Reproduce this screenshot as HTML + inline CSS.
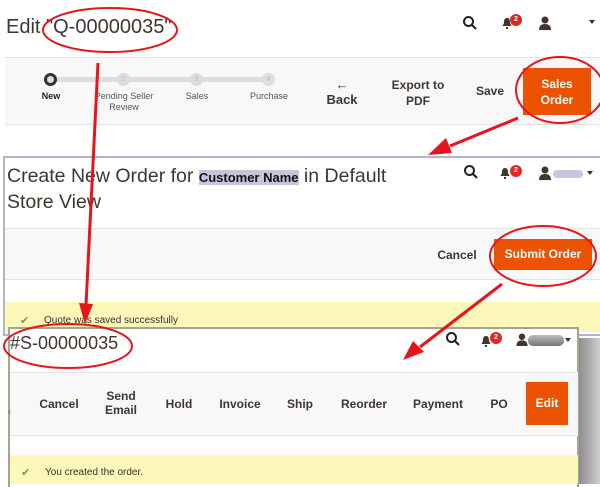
<!DOCTYPE html>
<html><head><meta charset="utf-8"><style>
*{margin:0;padding:0;box-sizing:border-box}
body{width:600px;height:484px;overflow:hidden;background:#fff;font-family:"Liberation Sans","DejaVu Sans",sans-serif;color:#303030;position:relative}
.a{position:absolute}
.t{font-size:20px;color:#41362f;font-weight:normal}
.bar{background:#f8f8f8;border-top:1px solid #e3e3e3;border-bottom:1px solid #e3e3e3}
.btn{font-size:12px;font-weight:bold;color:#41362f;text-align:center;line-height:14px}
.or{background:#eb5202;color:#fff;font-weight:bold;text-align:center}
.sm{font-size:9px;color:#555;text-align:center}
.c{width:13px;height:13px;border-radius:50%;background:#ddd;color:#bbb;font-size:7px;text-align:center;line-height:13px}
.msg{background:#fdf8ba;font-size:10px;color:#333}
.badge{width:12px;height:12px;border-radius:50%;background:#e22626;color:#fff;font-size:7px;font-weight:bold;text-align:center;line-height:12px}
</style></head><body>

<div class="a t" style="left:6px;top:16px">Edit "Q-00000035"</div>
<svg class="a" style="left:462px;top:15px" width="16" height="16" viewBox="0 0 16 16"><circle cx="6.5" cy="6.5" r="4.5" fill="none" stroke="#222" stroke-width="2"/><path d="M10 10l4 4" stroke="#222" stroke-width="2.2"/></svg>
<svg class="a" style="left:502px;top:17px" width="10" height="12" viewBox="0 0 10 12"><path d="M5 1c3 0 3 3 3 5l1.5 3H.5L2 6c0-2 0-5 3-5zM4 10h2v2H4z" fill="#41362f"/></svg>
<div class="a badge" style="left:510px;top:14px">2</div>
<svg class="a" style="left:539px;top:16px" width="12" height="14" viewBox="0 0 12 14"><circle cx="6" cy="4" r="3.5" fill="#41362f"/><path d="M0 14c0-4 2-6 6-6s6 2 6 6z" fill="#41362f"/></svg>
<div class="a" style="left:589px;top:20px;border:3px solid transparent;border-top:4px solid #333"></div>

<div class="a bar" style="left:5px;top:57px;width:595px;height:68px"></div>
<div class="a" style="left:51px;top:77px;width:218px;height:5px;background:#ddd"></div>
<div class="a c" style="left:44px;top:73px;background:#ddd;border:3px solid #333;width:13px;height:13px"></div>
<div class="a c" style="left:117px;top:73px">2</div>
<div class="a c" style="left:190px;top:73px">3</div>
<div class="a c" style="left:262px;top:73px">4</div>
<div class="a sm" style="left:30px;top:91px;width:42px;color:#222;font-weight:bold">New</div>
<div class="a sm" style="left:89px;top:91px;width:70px;line-height:11px">Pending Seller Review</div>
<div class="a sm" style="left:176px;top:91px;width:42px">Sales</div>
<div class="a sm" style="left:244px;top:91px;width:50px">Purchase</div>
<div class="a btn" style="left:320px;top:77px;width:44px;font-size:13px;line-height:15px">←<br>Back</div>
<div class="a btn" style="left:385px;top:77px;width:66px;line-height:16px">Export to<br>PDF</div>
<div class="a btn" style="left:470px;top:84px;width:40px">Save</div>
<div class="a or" style="left:523px;top:68px;width:68px;height:47px;font-size:12px;line-height:16px;padding-top:8px">Sales<br>Order</div>

<div class="a" style="left:3px;top:156px;width:600px;height:180px;background:#fff;border:2px solid #b5b1cf;border-right:none"></div>
<div class="a t" style="left:7px;top:164px;line-height:24px;font-size:19.5px">Create New Order for <span style="font-size:13px;font-weight:bold;color:#111;background:#c8c4dc">Customer Name</span> in Default<br>Store View</div>
<svg class="a" style="left:463px;top:164px" width="16" height="16" viewBox="0 0 16 16"><circle cx="6.5" cy="6.5" r="4.5" fill="none" stroke="#222" stroke-width="2"/><path d="M10 10l4 4" stroke="#222" stroke-width="2.2"/></svg>
<svg class="a" style="left:500px;top:167px" width="10" height="12" viewBox="0 0 10 12"><path d="M5 1c3 0 3 3 3 5l1.5 3H.5L2 6c0-2 0-5 3-5zM4 10h2v2H4z" fill="#41362f"/></svg>
<div class="a badge" style="left:510px;top:165px">2</div>
<svg class="a" style="left:539px;top:166px" width="12" height="14" viewBox="0 0 12 14"><circle cx="6" cy="4" r="3.5" fill="#41362f"/><path d="M0 14c0-4 2-6 6-6s6 2 6 6z" fill="#41362f"/></svg>
<div class="a" style="left:553px;top:170px;width:30px;height:8px;border-radius:4px;background:#c8c4dc"></div>
<div class="a" style="left:587px;top:171px;border:3px solid transparent;border-top:4px solid #333"></div>
<div class="a bar" style="left:5px;top:228px;width:595px;height:52px"></div>
<div class="a btn" style="left:432px;top:248px;width:50px">Cancel</div>
<div class="a or" style="left:494px;top:239px;width:98px;height:31px;font-size:12px;line-height:31px">Submit Order</div>
<div class="a msg" style="left:5px;top:302px;width:595px;height:30px"></div>
<div class="a" style="left:20px;top:314px;color:#79a22e;font-size:11px">✔</div>
<div class="a" style="left:44px;top:315px;font-size:10px;color:#333">Quote was saved successfully</div>

<div class="a" style="left:578px;top:338px;width:22px;height:146px;background:linear-gradient(90deg,#8a8a8a,#cfcfcf)"></div>
<div class="a" style="left:8px;top:327px;width:571px;height:160px;background:#fff;border:2px solid #a7a48c;border-bottom:none"></div>
<div class="a t" style="left:10px;top:333px;font-size:18px">#S-00000035</div>
<svg class="a" style="left:445px;top:331px" width="16" height="16" viewBox="0 0 16 16"><circle cx="6.5" cy="6.5" r="4.5" fill="none" stroke="#222" stroke-width="2"/><path d="M10 10l4 4" stroke="#222" stroke-width="2.2"/></svg>
<div class="a" style="left:481px;top:334px"><svg width="10" height="12" viewBox="0 0 10 12"><path d="M5 1c3 0 3 3 3 5l1.5 3H.5L2 6c0-2 0-5 3-5zM4 10h2v2H4z" fill="#41362f"/></svg></div>
<div class="a badge" style="left:490px;top:332px">2</div>
<svg class="a" style="left:516px;top:333px" width="12" height="13" viewBox="0 0 12 14"><circle cx="6" cy="4" r="3.5" fill="#41362f"/><path d="M0 14c0-4 2-6 6-6s6 2 6 6z" fill="#41362f"/></svg>
<div class="a" style="left:528px;top:335px;width:36px;height:11px;border-radius:5px;background:linear-gradient(#bbb,#777)"></div>
<div class="a" style="left:565px;top:338px;border:3px solid transparent;border-top:4px solid #333"></div>
<div class="a bar" style="left:10px;top:372px;width:568px;height:64px"></div>
<div class="a" style="left:8px;top:406px;font-size:9px;color:#555">‹</div>
<div class="a btn" style="left:34px;top:397px;width:50px">Cancel</div>
<div class="a btn" style="left:96px;top:389px;width:50px">Send<br>Email</div>
<div class="a btn" style="left:160px;top:397px;width:38px">Hold</div>
<div class="a btn" style="left:214px;top:397px;width:52px">Invoice</div>
<div class="a btn" style="left:282px;top:397px;width:36px">Ship</div>
<div class="a btn" style="left:336px;top:397px;width:56px">Reorder</div>
<div class="a btn" style="left:408px;top:397px;width:60px">Payment</div>
<div class="a btn" style="left:484px;top:397px;width:30px">PO</div>
<div class="a or" style="left:526px;top:382px;width:42px;height:43px;font-size:12px;line-height:43px">Edit</div>
<div class="a msg" style="left:10px;top:455px;width:568px;height:29px"></div>
<div class="a" style="left:21px;top:466px;color:#79a22e;font-size:11px">✔</div>
<div class="a" style="left:45px;top:467px;font-size:10px;color:#333">You created the order.</div>

<svg class="a" style="left:0;top:0" width="600" height="484" viewBox="0 0 600 484">
<g fill="none" stroke="#e8141c" stroke-width="2">
<ellipse cx="110" cy="30" rx="67" ry="22"/>
<ellipse cx="560" cy="90" rx="44" ry="33"/>
<ellipse cx="543" cy="256" rx="53" ry="30"/>
<ellipse cx="68" cy="346" rx="64" ry="22"/>
</g>
<g stroke="#e8141c" stroke-width="3" fill="#e8141c">
<line x1="98" y1="63" x2="86" y2="305"/>
<polygon points="79,303 93,304 85,324" stroke="none"/>
<line x1="518" y1="118" x2="450" y2="146"/>
<polygon points="446,138 452,153 428,155" stroke="none"/>
<line x1="502" y1="284" x2="420" y2="347"/>
<polygon points="413,341 424,352 403,360" stroke="none"/>
</g>
</svg>
</body></html>
